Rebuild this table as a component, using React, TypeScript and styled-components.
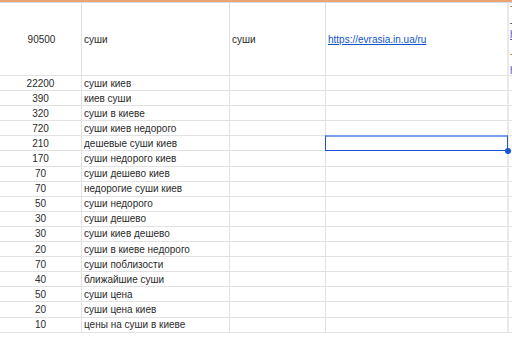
import * as React from 'react';
import styled, { createGlobalStyle, css } from 'styled-components';

const GlobalStyle = createGlobalStyle`
  html, body {
    margin: 0;
    padding: 0;
    background: #ffffff;
  }
  body {
    font-family: "Liberation Sans", Arial, sans-serif;
    overflow: hidden;
  }
`;

type Row = { volume: number; query: string };

const rows: Row[] = [
  { volume: 22200, query: 'суши киев' },
  { volume: 390, query: 'киев суши' },
  { volume: 320, query: 'суши в киеве' },
  { volume: 720, query: 'суши киев недорого' },
  { volume: 210, query: 'дешевые суши киев' },
  { volume: 170, query: 'суши недорого киев' },
  { volume: 70, query: 'суши дешево киев' },
  { volume: 70, query: 'недорогие суши киев' },
  { volume: 50, query: 'суши недорого' },
  { volume: 30, query: 'суши дешево' },
  { volume: 30, query: 'суши киев дешево' },
  { volume: 20, query: 'суши в киеве недорого' },
  { volume: 70, query: 'суши поблизости' },
  { volume: 40, query: 'ближайшие суши' },
  { volume: 50, query: 'суши цена' },
  { volume: 20, query: 'суши цена киев' },
  { volume: 10, query: 'цены на суши в киеве' },
];

const SELECTED_ROW = 4;

const TopStrip = styled.div`
  height: 2px;
  background: #eba46f;
  border-bottom: 1px solid #d5dde4;
`;

const Sheet = styled.div`
  display: flex;
  flex-direction: column;
`;

const GridRow = styled.div<{ $header?: boolean }>`
  display: grid;
  grid-template-columns: 82px 148px 96px 183px 1fr;
  height: ${(p) => (p.$header ? '73px' : '15.1px')};
`;

const Cell = styled.div<{ $align?: 'center' | 'left'; $wide?: boolean; $last?: boolean }>`
  position: relative;
  box-sizing: border-box;
  display: flex;
  align-items: center;
  justify-content: ${(p) => (p.$align === 'center' ? 'center' : 'flex-start')};
  padding: 0 2px;
  border-right: ${(p) => (p.$wide ? '2px solid #e9e9e9' : '1px solid #e2e2e2')};
  border-bottom: 1px solid #e2e2e2;
  font-size: 10px;
  color: #2b2b2b;
  white-space: nowrap;
  overflow: visible;
  ${(p) =>
    p.$last &&
    css`
      border-right: none;
      overflow: hidden;
      padding: 0 0 0 1px;
    `}
`;

const NumberText = styled.span`
  padding-left: 2px;
`;

const Link = styled.a`
  color: #1155cc;
  text-decoration: underline;
`;

const NextColumn = styled.div`
  align-self: flex-start;
  display: flex;
  flex-direction: column;
  padding-top: 2px;
  font-size: 10px;
  line-height: 12px;
`;

const NoteLine = styled.span<{ $tone: 'brown' | 'dark' | 'link' | 'empty' }>`
  height: 12px;
  ${(p) =>
    p.$tone === 'brown' &&
    css`
      color: #8d6a3f;
    `}
  ${(p) =>
    p.$tone === 'dark' &&
    css`
      color: #333;
    `}
  ${(p) =>
    p.$tone === 'link' &&
    css`
      color: #5b53c4;
      text-decoration: underline;
    `}
`;

const Selection = styled.div`
  position: absolute;
  left: -1px;
  top: -1px;
  right: -1px;
  bottom: -1px;
  z-index: 2;
  border: 1px solid #1d4fd6;
  border-top: 2px solid #7c9de9;
  pointer-events: none;
`;

const FillHandle = styled.div`
  position: absolute;
  right: -4px;
  bottom: -4px;
  width: 6px;
  height: 6px;
  border-radius: 50%;
  background: #1a56d6;
`;

export default function App() {
  return (
    <>
      <GlobalStyle />
      <TopStrip />
      <Sheet>
        <GridRow $header>
          <Cell $align="center">
            <NumberText>90500</NumberText>
          </Cell>
          <Cell>суши</Cell>
          <Cell>суши</Cell>
          <Cell $wide>
            <Link href="#">https://evrasia.in.ua/ru</Link>
          </Cell>
          <Cell $last>
            <NextColumn>
              <NoteLine $tone="brown">Т</NoteLine>
              <NoteLine $tone="dark">–</NoteLine>
              <NoteLine $tone="link">h</NoteLine>
              <NoteLine $tone="empty"> </NoteLine>
              <NoteLine $tone="brown">Т</NoteLine>
              <NoteLine $tone="link">h</NoteLine>
            </NextColumn>
          </Cell>
        </GridRow>
        {rows.map((r, i) => (
          <GridRow key={i}>
            <Cell $align="center">{r.volume}</Cell>
            <Cell>{r.query}</Cell>
            <Cell />
            <Cell $wide>
              {i === SELECTED_ROW && (
                <Selection>
                  <FillHandle />
                </Selection>
              )}
            </Cell>
            <Cell $last />
          </GridRow>
        ))}
      </Sheet>
    </>
  );
}
